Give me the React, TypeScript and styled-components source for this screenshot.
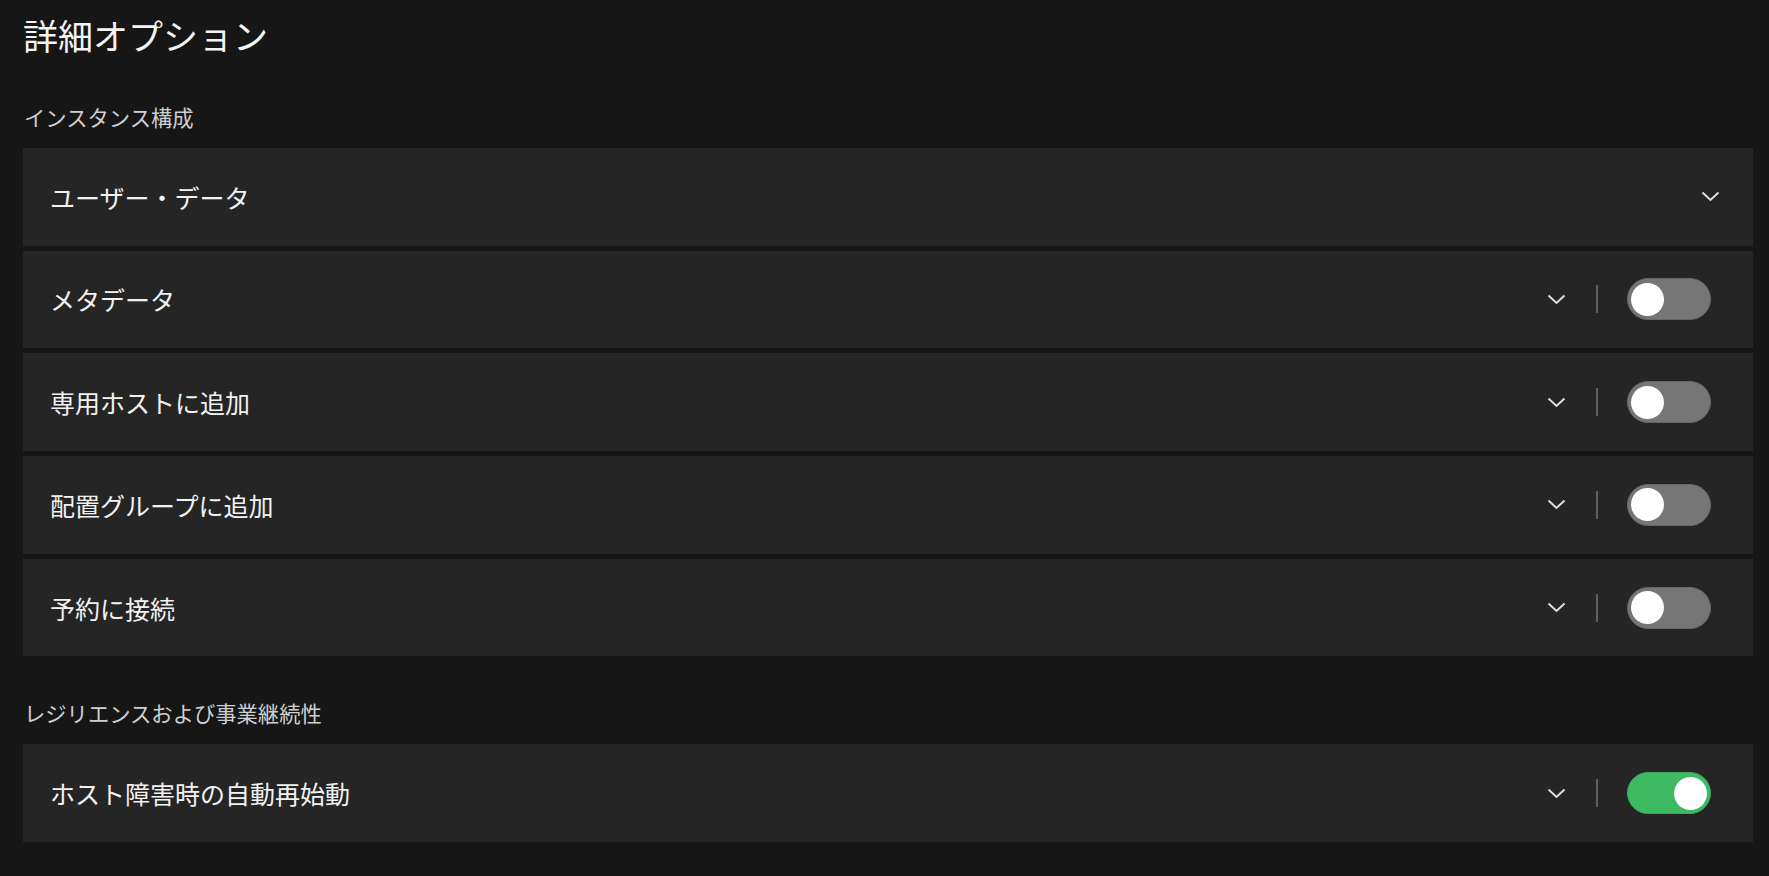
import React from 'react';
import styled, { createGlobalStyle } from 'styled-components';

const GlobalStyle = createGlobalStyle`
  html, body {
    margin: 0;
    padding: 0;
    background: #161616;
  }
  body {
    font-family: "Noto Sans CJK JP", "Noto Sans", sans-serif;
    color: #f2f2f2;
  }
`;

const Page = styled.div`
  box-sizing: border-box;
  width: 1769px;
  height: 876px;
  padding: 15px 16px 0 23px;
  background: #161616;
  overflow: hidden;
`;

const Title = styled.h1`
  margin: 0;
  font-size: 35px;
  line-height: 40px;
  font-weight: 400;
  color: #f4f4f4;
`;

const SectionLabel = styled.div<{ $top: number }>`
  margin: ${props => props.$top}px 0 17px 1px;
  font-size: 21.3px;
  line-height: 28px;
  color: #cfcfcf;
`;

const List = styled.div`
  display: flex;
  flex-direction: column;
  gap: 5.2px;
`;

const Card = styled.div<{ $toggle: boolean }>`
  display: flex;
  align-items: center;
  height: 97.5px;
  box-sizing: border-box;
  padding: 0 ${props => (props.$toggle ? 42 : 33)}px 0 27px;
  background: #252525;
`;

const Label = styled.div`
  flex: 1;
  font-size: 25px;
  color: #f2f2f2;
`;

const Controls = styled.div`
  display: flex;
  align-items: center;
`;

const Chevron = styled.svg`
  width: 19px;
  height: 11px;
  display: block;
`;

const Divider = styled.div`
  width: 2px;
  height: 28px;
  margin: 0 29px 0 30px;
  background: #5f5f5f;
`;

const Track = styled.div<{ $on: boolean }>`
  position: relative;
  width: 84px;
  height: 42px;
  box-sizing: border-box;
  border-radius: 21px;
  background: ${props => (props.$on ? '#3dba62' : '#767676')};
  border: 1px solid ${props => (props.$on ? '#38a95a' : '#666666')};
`;

const Knob = styled.div<{ $on: boolean }>`
  position: absolute;
  top: 3.5px;
  left: ${props => (props.$on ? 46 : 3)}px;
  width: 33px;
  height: 33px;
  border-radius: 50%;
  background: #ffffff;
`;

const ChevronIcon = () => (
  <Chevron viewBox="0 0 19 11">
    <path d="M1.5 1.5 L9.5 9 L17.5 1.5" fill="none" stroke="#dedede" strokeWidth="2" />
  </Chevron>
);

interface RowProps {
  label: string;
  toggle?: boolean;
  on?: boolean;
}

const Row = ({ label, toggle = false, on = false }: RowProps) => (
  <Card $toggle={toggle}>
    <Label>{label}</Label>
    <Controls>
      <ChevronIcon />
      {toggle && (
        <>
          <Divider />
          <Track $on={on}>
            <Knob $on={on} />
          </Track>
        </>
      )}
    </Controls>
  </Card>
);

const App = () => (
  <Page>
    <GlobalStyle />
    <Title>詳細オプション</Title>
    <SectionLabel $top={48}>インスタンス構成</SectionLabel>
    <List>
      <Row label="ユーザー・データ" />
      <Row label="メタデータ" toggle />
      <Row label="専用ホストに追加" toggle />
      <Row label="配置グループに追加" toggle />
      <Row label="予約に接続" toggle />
    </List>
    <SectionLabel $top={43}>レジリエンスおよび事業継続性</SectionLabel>
    <List>
      <Row label="ホスト障害時の自動再始動" toggle on />
    </List>
  </Page>
);

export default App;
